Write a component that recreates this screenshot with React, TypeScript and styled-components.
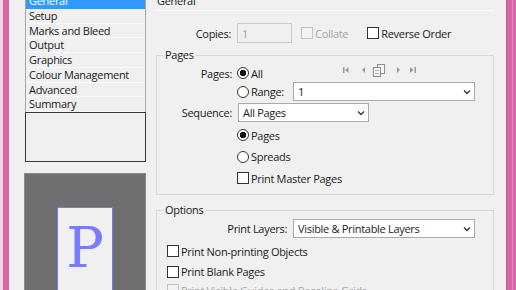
import styled, { createGlobalStyle } from "styled-components";

const GlobalStyle = createGlobalStyle`
  html, body {
    margin: 0;
    padding: 0;
    background: #f0f0f0;
  }
  body {
    font-family: "Open Sans", "Noto Sans", "Liberation Sans", sans-serif;
    font-size: 11px;
    letter-spacing: -0.3px;
    color: #1b1b1b;
  }
`;

const Window = styled.div`
  display: flex;
  width: 516px;
  height: 290px;
  overflow: hidden;
  background: #f0f0f0;
`;

const FrameLeft = styled.div`
  width: 10px;
  flex-shrink: 0;
  background: linear-gradient(to right, #f3d3e5 0 3px, #d766a6 3px 9px, #f6eef2 9px 10px);
`;

const FrameRight = styled.div`
  width: 10px;
  flex-shrink: 0;
  background: linear-gradient(to right, #c4548f 0 1px, #d766a6 1px 6px, #e08abb 6px 7px, #d766a6 7px 10px);
`;

const Body = styled.div`
  display: flex;
  gap: 10px;
  flex: 1;
  margin-top: -7px;
  padding: 0 12px 0 14px;
  height: calc(100% + 7px);
`;

const Sidebar = styled.div`
  width: 122px;
  display: flex;
  flex-direction: column;
`;

const NavList = styled.div`
  flex-shrink: 0;
  margin-left: 1px;
  border: 1px solid #a6a6a6;
  border-bottom: none;
  background: #f0f0f0;
`;

const NavItem = styled.div<{ $active?: boolean }>`
  height: 14.75px;
  line-height: 14px;
  box-sizing: border-box;
  padding-left: 3px;
  border-bottom: 1px solid ${(p) => (p.$active ? "#3399ff" : "#fafafa")};
  background: ${(p) => (p.$active ? "#3399ff" : "transparent")};
  color: ${(p) => (p.$active ? "#ffffff" : "#1b1b1b")};
  white-space: nowrap;
`;

const EmptyBox = styled.div`
  flex-shrink: 0;
  margin-left: 1px;
  height: 50px;
  box-sizing: border-box;
  border: 1px solid #3a3a3a;
  background: #f0f0f0;
`;

const Preview = styled.div`
  margin-top: 11px;
  flex: 1;
  min-height: 0;
  overflow: hidden;
  background: #6f6f6f;
  border: 1px solid #8a8a8a;
  border-bottom: none;
  display: flex;
  justify-content: center;
  padding-top: 33px;
`;

const PageThumb = styled.div`
  width: 56px;
  height: 120px;
  flex-shrink: 0;
  box-sizing: border-box;
  border: 1px solid #7878ff;
  background: #f0f0f0;
  display: flex;
  justify-content: center;
  padding-top: 12px;
  font-family: "DejaVu Serif", "Liberation Serif", serif;
  font-size: 56px;
  line-height: 1;
  letter-spacing: 0;
  color: #7b7bff;
`;

const Main = styled.div`
  width: 338px;
  display: flex;
  flex-direction: column;
`;

const Title = styled.div`
  line-height: 16px;
  height: 16px;
  padding-left: 1px;
`;

const Rule = styled.div`
  margin-top: 1px;
  height: 1px;
  background: #cdcdcd;
  border-bottom: 1px solid #fbfbfb;
`;

const Row = styled.div<{ $h: number; $indent?: number; $end?: boolean }>`
  display: flex;
  align-items: center;
  height: ${(p) => p.$h}px;
  padding-left: ${(p) => p.$indent ?? 0}px;
  padding-right: 18px;
  justify-content: ${(p) => (p.$end ? "flex-end" : "flex-start")};
  white-space: nowrap;
`;

const FieldLabel = styled.span`
  width: 75px;
  flex-shrink: 0;
  text-align: right;
  margin-right: 5px;
`;

const InlineLabel = styled.span`
  margin-right: 5px;
`;

const Group = styled.fieldset<{ $mt: number }>`
  margin: ${(p) => p.$mt}px 0 0;
  padding: 0 0 5px;
  border: 1px solid #d8d8d8;
  min-width: 0;
`;

const Legend = styled.legend`
  margin-left: 6px;
  padding: 0 2px;
  line-height: 14px;
  font-size: 11px;
`;

const GroupBody = styled.div`
  padding-top: 2px;
`;

const TextBox = styled.div<{ $w: number; $h: number; $disabled?: boolean }>`
  width: ${(p) => p.$w}px;
  height: ${(p) => p.$h}px;
  box-sizing: border-box;
  margin-left: 1px;
  padding-left: 4px;
  display: flex;
  align-items: center;
  border: 1px solid ${(p) => (p.$disabled ? "#cacaca" : "#ababab")};
  background: ${(p) => (p.$disabled ? "#f0f0f0" : "#ffffff")};
  color: ${(p) => (p.$disabled ? "#9d9d9d" : "#1b1b1b")};
`;

const SelectBox = styled(TextBox)<{ $push?: boolean }>`
  justify-content: space-between;
  padding-right: 3px;
  margin-left: ${(p) => (p.$push ? "auto" : "1px")};
`;

const Chevron = () => (
  <svg width="8" height="6" viewBox="0 0 8 6">
    <path d="M1 1.5 L4 4.5 L7 1.5" fill="none" stroke="#333" strokeWidth="1.3" />
  </svg>
);

const Select = ({
  w,
  h,
  value,
  push,
}: {
  w: number;
  h: number;
  value: string;
  push?: boolean;
}) => (
  <SelectBox $w={w} $h={h} $push={push}>
    <span>{value}</span>
    <Chevron />
  </SelectBox>
);

const Option = styled.span<{ $ml?: number; $disabled?: boolean }>`
  display: inline-flex;
  align-items: center;
  margin-left: ${(p) => p.$ml ?? 0}px;
  color: ${(p) => (p.$disabled ? "#a6a6a6" : "#1b1b1b")};
`;

const CheckBox = styled.span<{ $disabled?: boolean }>`
  width: 12px;
  height: 12px;
  box-sizing: border-box;
  margin-right: 2px;
  border: 1px solid ${(p) => (p.$disabled ? "#c2c2c2" : "#333333")};
  background: ${(p) => (p.$disabled ? "#f3f3f3" : "#ffffff")};
`;

const Radio = styled.span<{ $on?: boolean }>`
  width: 12px;
  height: 12px;
  box-sizing: border-box;
  margin-right: 2px;
  border-radius: 50%;
  border: 1px solid #333333;
  background: ${(p) =>
    p.$on ? "radial-gradient(circle, #111 0 3px, #fff 3.5px)" : "#ffffff"};
`;

const NavIcons = styled.svg`
  align-self: flex-start;
  margin-top: -1px;
  margin-left: auto;
  margin-right: 58px;
`;

const PageNav = () => (
  <NavIcons width="74" height="14" viewBox="0 0 74 14">
    <g fill="#9c9c9c">
      <rect x="0" y="4" width="1.5" height="6" />
      <polygon points="5.5,4 2,7 5.5,10" />
      <polygon points="22,4 19,7 22,10" />
      <polygon points="54,4 57,7 54,10" />
      <polygon points="67,4 70.5,7 67,10" />
      <rect x="71.5" y="4" width="1.5" height="6" />
    </g>
    <g fill="#f6f6f6" stroke="#8e8e8e" strokeWidth="1">
      <rect x="34.5" y="1.5" width="7" height="9" />
      <rect x="30.5" y="4.5" width="7" height="9" />
    </g>
    <g stroke="#b0b0b0" strokeWidth="1">
      <line x1="32" y1="7.5" x2="36" y2="7.5" />
      <line x1="32" y1="10.5" x2="36" y2="10.5" />
    </g>
  </NavIcons>
);

const navItems = [
  "General",
  "Setup",
  "Marks and Bleed",
  "Output",
  "Graphics",
  "Colour Management",
  "Advanced",
  "Summary",
];

export default function App() {
  return (
    <>
      <GlobalStyle />
      <Window>
        <FrameLeft />
        <Body>
          <Sidebar>
            <NavList>
              {navItems.map((item, i) => (
                <NavItem key={item} $active={i === 0}>
                  {item}
                </NavItem>
              ))}
            </NavList>
            <EmptyBox />
            <Preview>
              <PageThumb>P</PageThumb>
            </Preview>
          </Sidebar>

          <Main>
            <Title>General</Title>
            <Rule />

            <Row $h={20} style={{ marginTop: 12 }}>
              <FieldLabel>Copies:</FieldLabel>
              <TextBox $w={55} $h={20} $disabled>
                1
              </TextBox>
              <Option $ml={9} $disabled>
                <CheckBox $disabled />
                Collate
              </Option>
              <Option $ml={19}>
                <CheckBox />
                Reverse Order
              </Option>
            </Row>

            <Group $mt={5}>
              <Legend>Pages</Legend>
              <GroupBody>
                <Row $h={18}>
                  <FieldLabel>Pages:</FieldLabel>
                  <Option>
                    <Radio $on />
                    All
                  </Option>
                  <PageNav />
                </Row>
                <Row $h={19} $indent={80}>
                  <Option>
                    <Radio />
                    Range:
                  </Option>
                  <Select w={182} h={19} value="1" push />
                </Row>
                <Row $h={23}>
                  <FieldLabel>Sequence:</FieldLabel>
                  <Select w={131} h={19} value="All Pages" />
                </Row>
                <Row $h={22} $indent={80}>
                  <Option>
                    <Radio $on />
                    Pages
                  </Option>
                </Row>
                <Row $h={21} $indent={80}>
                  <Option>
                    <Radio />
                    Spreads
                  </Option>
                </Row>
                <Row $h={22} $indent={80}>
                  <Option>
                    <CheckBox />
                    Print Master Pages
                  </Option>
                </Row>
              </GroupBody>
            </Group>

            <Group $mt={8}>
              <Legend>Options</Legend>
              <Row $h={23} $end>
                <InlineLabel>Print Layers:</InlineLabel>
                <Select w={182} h={19} value="Visible & Printable Layers" />
              </Row>
              <Row $h={22} $indent={10}>
                <Option>
                  <CheckBox />
                  Print Non-printing Objects
                </Option>
              </Row>
              <Row $h={19} $indent={10}>
                <Option>
                  <CheckBox />
                  Print Blank Pages
                </Option>
              </Row>
              <Row $h={18} $indent={10}>
                <Option $disabled>
                  <CheckBox $disabled />
                  Print Visible Guides and Baseline Grids
                </Option>
              </Row>
            </Group>
          </Main>
        </Body>
        <FrameRight />
      </Window>
    </>
  );
}
